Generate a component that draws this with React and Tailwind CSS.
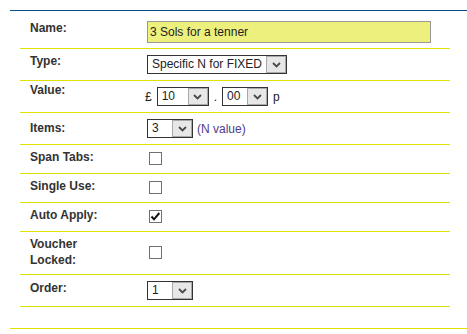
import React from 'react';

function Select({ value, width }) {
  return (
    <div className={`flex h-[19px] border border-[#333] bg-white ${width}`}>
      <span className="flex-1 pl-[4px] text-[12px] leading-[17px] text-[#222] whitespace-nowrap overflow-hidden">
        {value}
      </span>
      <span className="flex w-[20px] items-center justify-center border border-[#a9a9a9] bg-[#e7e7e7]">
        <svg width="9" height="6" viewBox="0 0 9 6">
          <path d="M1 1 L4.5 4.5 L8 1" fill="none" stroke="#4a4a4a" strokeWidth="1.8" />
        </svg>
      </span>
    </div>
  );
}

function Checkbox({ checked }) {
  return (
    <span className="ml-[4px] flex h-[13px] w-[13px] items-center justify-center border border-[#707070] bg-white">
      {checked && (
        <svg width="11" height="11" viewBox="0 0 11 11">
          <path d="M1.5 5.5 L4 8.3 L9.3 2" fill="none" stroke="#111" strokeWidth="2" />
        </svg>
      )}
    </span>
  );
}

function Row({ label, height, labelPad, children, controlPad }) {
  return (
    <div className={`flex items-start border-b border-[#dfe200] ${height}`}>
      <div className={`w-[125px] shrink-0 pl-[10px] text-[12px] font-bold leading-[16px] text-[#333] ${labelPad}`}>
        {label}
      </div>
      <div className={`flex items-center ${controlPad}`}>{children}</div>
    </div>
  );
}

export default function App() {
  return (
    <div className="h-[334px] w-full bg-white pl-[10px] pt-[10px] font-['Liberation_Sans',Arial,sans-serif]">
      <div className="border-t border-b border-t-[#0b4a86] border-b-[#dfe200] pb-[21px]">
        <div className="ml-[10px] w-[430px]">
          {/* Name */}
          <Row label="Name:" height="h-[38px]" labelPad="pt-[9px]" controlPad="pt-[10px] pl-[2px]">
            <div className="h-[22px] w-[284px] border border-[#999] bg-[#edf07d] pl-[2px] text-[12px] leading-[20px] text-[#222]">
              3 Sols for a tenner
            </div>
          </Row>

          {/* Type */}
          <Row label="Type:" height="h-[32px]" labelPad="pt-[4px]" controlPad="pt-[6px] pl-[2px]">
            <Select value="Specific N for FIXED" width="w-[140px]" />
          </Row>

          {/* Value */}
          <Row label="Value:" height="h-[32px]" labelPad="pt-[1px]" controlPad="pt-[6px]">
            <span className="text-[12px] text-[#222]">£</span>
            <div className="ml-[5px]">
              <Select value="10" width="w-[52px]" />
            </div>
            <span className="ml-[5px] text-[12px] text-[#222]">.</span>
            <div className="ml-[5px]">
              <Select value="00" width="w-[46px]" />
            </div>
            <span className="ml-[5px] text-[12px] text-[#222]">p</span>
          </Row>

          {/* Items */}
          <Row label="Items:" height="h-[32px]" labelPad="pt-[7px]" controlPad="pt-[6px] pl-[2px]">
            <Select value="3" width="w-[46px]" />
            <span className="ml-[4px] text-[12px] text-[#4f3b8e]">(N value)</span>
          </Row>

          <Row label="Span Tabs:" height="h-[29px]" labelPad="pt-[4px]" controlPad="pt-[7px]">
            <Checkbox />
          </Row>
          <Row label="Single Use:" height="h-[29px]" labelPad="pt-[4px]" controlPad="pt-[7px]">
            <Checkbox />
          </Row>
          <Row label="Auto Apply:" height="h-[29px]" labelPad="pt-[4px]" controlPad="pt-[7px]">
            <Checkbox checked />
          </Row>
          <Row
            label={
              <>
                Voucher
                <br />
                Locked:
              </>
            }
            height="h-[43px]"
            labelPad="pt-[4px]"
            controlPad="pt-[14px]"
          >
            <Checkbox />
          </Row>

          {/* Order */}
          <Row label="Order:" height="h-[32px]" labelPad="pt-[5px]" controlPad="pt-[6px] pl-[2px]">
            <Select value="1" width="w-[46px]" />
          </Row>
        </div>
      </div>
    </div>
  );
}
